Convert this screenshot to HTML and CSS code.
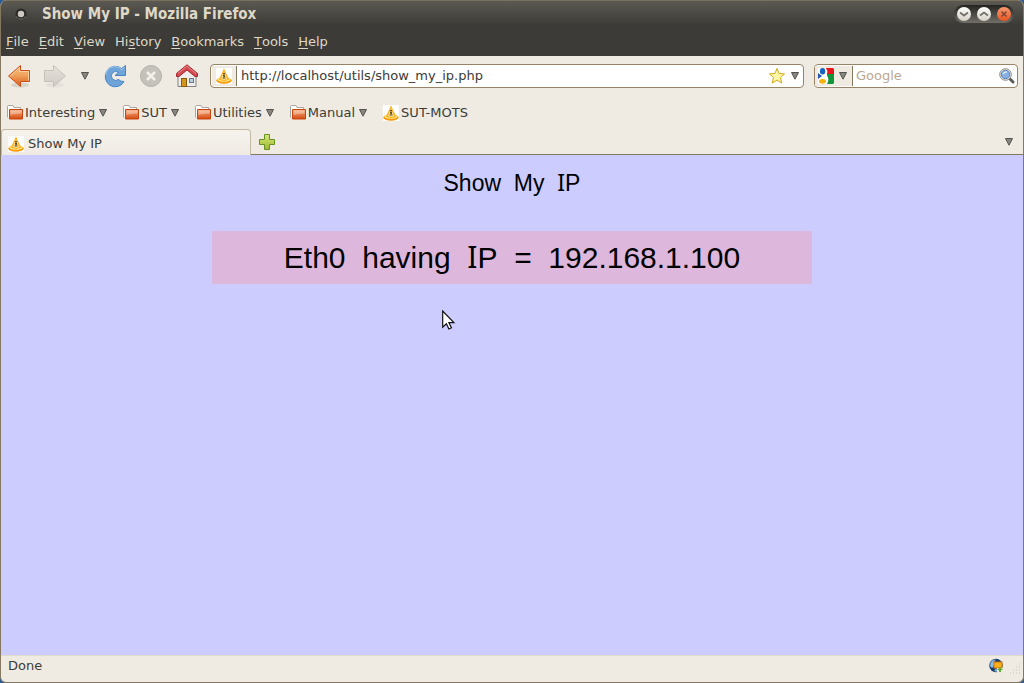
FILE: index.html
```html
<!DOCTYPE html>
<html lang="en">
<head>
<meta charset="utf-8">
<meta name="viewport" content="width=device-width, initial-scale=1">
<title>Show My IP - Mozilla Firefox</title>
<link rel="stylesheet" href="styles.css">
</head>
<body>
<svg class="defs" width="0" height="0" aria-hidden="true">
  <defs>
    <linearGradient id="orange" x1="0" y1="0" x2="0" y2="1"><stop offset="0" stop-color="#f8c089"/><stop offset=".45" stop-color="#efa45c"/><stop offset="1" stop-color="#dc5a1c"/></linearGradient>
    <linearGradient id="folder" x1="0" y1="0" x2="0" y2="1"><stop offset="0" stop-color="#f7b184"/><stop offset="1" stop-color="#d64a10"/></linearGradient>
    <linearGradient id="grey" x1="0" y1="0" x2="0" y2="1"><stop offset="0" stop-color="#e6e2dc"/><stop offset="1" stop-color="#cfcac3"/></linearGradient>
    <linearGradient id="green" x1="0" y1="0" x2="0" y2="1"><stop offset="0" stop-color="#dbe87a"/><stop offset="1" stop-color="#9ab82f"/></linearGradient>
    <symbol id="site" viewBox="0 0 16 16">
      <rect width="16" height="16" fill="#fff"/>
      <ellipse cx="8" cy="12.500" rx="7.700" ry="3.200" fill="#f59a0c"/>
      <ellipse cx="8" cy="11.500" rx="6.600" ry="2.300" fill="#ffe27a"/>
      <path d="M8 .5C8.800 1 9 3 9.800 4.600L13.300 11.500Q8 14.400 2.700 11.500L6.200 4.600C7 3 7.200 1 8 .5z" fill="#f9b52b"/>
      <path d="M8 4L11 11Q8 12.500 5 11z" fill="#ffe9a0"/>
      <path d="M7 5.500h2M8 5.500v2M7 7.500h2M7.500 9.500l.5-2 1 2M6.500 10h3" stroke="#655322" fill="none"/>
    </symbol>
    <symbol id="dir" viewBox="0 0 17 15">
      <path d="M.5 12.500V1.500Q.5.500 1.500.5H6l1 2h6.500v2" fill="#fff" stroke="#aaa69f"/>
      <path d="M2.500 4.500h13v9.500h-13z" fill="url(#folder)" stroke="#c6450f"/>
      <path d="M3.500 5.500h11v3Q9 8 3.500 10z" fill="#fff" opacity=".3"/>
    </symbol>
    <symbol id="down" viewBox="0 0 8 8">
      <path d="M.5.500h7L4 7.200z" fill="#888681" stroke="#55534e"/>
    </symbol>
  </defs>
</svg>
<div class="window">
  <header class="chrome">
    <div class="titlebar">
      <svg class="app-mark" width="14" height="14" viewBox="0 0 14 14" aria-hidden="true"><circle cx="8" cy="7" r="5.500" fill="#2d2c29"/><path d="M3 9.500Q8 15 13 9.500" fill="none" stroke="#6c6a62"/><circle cx="8" cy="7" r="3.200" fill="#cfcbc2"/></svg>
      <span class="title">Show My IP - Mozilla Firefox</span>
      <div class="controls">
        <button class="control" aria-label="Minimize"><svg width="14" height="14" viewBox="0 0 14 14"><path d="M3 5.500L7 8.500l4-3" fill="none" stroke="#73716a" stroke-width="1.800"/></svg></button>
        <button class="control" aria-label="Maximize"><svg width="14" height="14" viewBox="0 0 14 14"><path d="M3 8.500L7 5.500l4 3" fill="none" stroke="#73716a" stroke-width="1.800"/></svg></button>
        <button class="control close" aria-label="Close"><svg width="14" height="14" viewBox="0 0 14 14"><path d="M4.500 4.500l5 5M9.500 4.500l-5 5" fill="none" stroke="#7b4433" stroke-width="1.500"/></svg></button>
      </div>
    </div>
    <nav class="menubar">
      <button><u>F</u>ile</button><button><u>E</u>dit</button><button><u>V</u>iew</button><button>Hi<u>s</u>tory</button><button><u>B</u>ookmarks</button><button><u>T</u>ools</button><button><u>H</u>elp</button>
    </nav>
  </header>
  <div class="toolbar">
    <div class="nav-buttons">
      <button aria-label="Back"><svg width="24" height="24" viewBox="0 0 24 24"><ellipse cx="13" cy="21" rx="9" ry="2.500" fill="#d8d3ca"/><path d="M1.500 12L13.500 1.500v5h9v11h-9v5z" fill="url(#orange)" stroke="#cb4f18"/><path d="M3.200 12l9.300-8.300v3.800h9v9" fill="none" stroke="#fbd7ae" opacity=".8"/></svg></button>
      <button aria-label="Forward" disabled><svg width="24" height="24" viewBox="0 0 24 24"><ellipse cx="12" cy="21" rx="9" ry="2.500" fill="#e5e1da"/><path d="M22.500 12L10.500 1.500v5h-9v11h9v5z" fill="url(#grey)" stroke="#c5c0b9"/></svg></button>
      <button class="narrow" aria-label="Recent pages"><svg width="8" height="8"><use href="#down"/></svg></button>
      <button aria-label="Reload"><svg width="24" height="24" viewBox="0 0 24 24"><path d="M21 17.500A10 10.300 0 1 1 18.500 4.500L22.500 1.500v10H12l3.500-3.200A4.500 4.500 0 1 0 15.500 15.500Q18 18 21 17.500z" fill="#6fa4d9" stroke="#4485c6"/><path d="M3 11A8.800 8.800 0 0 1 18.500 5.800L21.500 3.500" fill="none" stroke="#a7c9eb"/></svg></button>
      <button aria-label="Stop" disabled><svg width="24" height="24" viewBox="0 0 24 24"><circle cx="12" cy="12" r="10.500" fill="#c5c1bb" stroke="#b5b1ac"/><path d="M8 8l8 8M16 8l-8 8" stroke="#f3f1ed" stroke-width="2.600"/></svg></button>
      <button aria-label="Home"><svg width="24" height="24" viewBox="0 0 24 24"><path d="M3 22.500V11l9-7 9 7v11.500z" fill="#efeeec" stroke="#85827e"/><rect x="6.500" y="14.500" width="5" height="8" fill="#d2951e" stroke="#8b5b0b"/><rect x="14.500" y="14.500" width="4" height="4" fill="#b9d0dc" stroke="#687985"/><path d="M1.500 12.500v-3L12 .8 22.500 9.500v3H20L12 6 4 12.500z" fill="#d34a50" stroke="#a62730"/><path d="M3 9.500L12 2l9 7.500" fill="none" stroke="#e98a8c"/></svg></button>
    </div>
    <div class="field address">
      <span class="site-id"><svg width="16" height="16"><use href="#site"/></svg></span>
      <input type="text" aria-label="Address" value="http://localhost/utils/show_my_ip.php">
      <button aria-label="Bookmark this page"><svg width="18" height="18" viewBox="0 0 18 18"><path d="M9 1.500l2.100 5 5.400.4-4 3.600 1.300 5.500L9 13.100 4.200 16l1.300-5.500-4-3.600 5.400-.4z" fill="#fff6a8" stroke="#cfa91a" stroke-linejoin="round"/></svg></button>
      <button aria-label="Show history"><svg width="8" height="8"><use href="#down"/></svg></button>
    </div>
    <div class="field search">
      <button class="engine" aria-label="Search engine"><svg width="16" height="16" viewBox="0 0 16 16"><rect width="16" height="16" rx="1" fill="#fff"/><path d="M8 0h7l1 1v5H9z" fill="#e8161c"/><path d="M9 6h7v9l-1 1H9z" fill="#14943a"/><path d="M0 5l4 3-4 3z" fill="#2458ae"/><path d="M7 0c3 2 3 5 1 7 3 2 3 6 1 9H3l-1-4 4-3-2-3z" fill="#fff"/><ellipse cx="4.600" cy="3.200" rx="2.700" ry="3.200" fill="#1763bd"/><ellipse cx="4.500" cy="13.300" rx="3.500" ry="2.400" fill="#f4b20e"/></svg><svg width="8" height="8"><use href="#down"/></svg></button>
      <input type="search" aria-label="Search" placeholder="Google">
      <button aria-label="Search"><svg width="16" height="16" viewBox="0 0 16 16"><path d="M10 10l4 4" stroke="#5c5b58" stroke-width="3" stroke-linecap="round"/><circle cx="6.500" cy="6.500" r="5.800" fill="#e7e6e3" stroke="#8c8a86"/><circle cx="6.500" cy="6.500" r="4.200" fill="#86b0e2" stroke="#5b84bd"/><path d="M4 6Q5 3.700 8 4" fill="none" stroke="#d7e7f8" stroke-width="1.500"/></svg></button>
    </div>
  </div>
  <nav class="bookmarks">
    <button><svg width="17" height="15"><use href="#dir"/></svg>Interesting<svg class="more" width="8" height="8"><use href="#down"/></svg></button>
    <button><svg width="17" height="15"><use href="#dir"/></svg>SUT<svg class="more" width="8" height="8"><use href="#down"/></svg></button>
    <button><svg width="17" height="15"><use href="#dir"/></svg>Utilities<svg class="more" width="8" height="8"><use href="#down"/></svg></button>
    <button><svg width="17" height="15"><use href="#dir"/></svg>Manual<svg class="more" width="8" height="8"><use href="#down"/></svg></button>
    <a href="#"><svg width="16" height="16"><use href="#site"/></svg>SUT-MOTS</a>
  </nav>
  <div class="tabs">
    <button class="tab"><svg width="16" height="16"><use href="#site"/></svg>Show My IP</button>
    <button class="new-tab" aria-label="New tab"><svg width="16" height="16" viewBox="0 0 16 16"><path d="M5.500.500h5v5h5v5h-5v5h-5v-5h-5v-5h5z" fill="url(#green)" stroke="#669221"/></svg></button>
    <button class="all-tabs" aria-label="List all tabs"><svg width="8" height="8"><use href="#down"/></svg></button>
  </div>
  <main class="page">
    <h1>Show&nbsp; My&nbsp; <span class="cap">I</span>P</h1>
    <p class="result">Eth0&nbsp; having&nbsp; <span class="cap">I</span>P&nbsp; =&nbsp; 192.168.1.100</p>
    <svg class="pointer" width="14" height="21" viewBox="0 0 14 21" aria-hidden="true"><path d="M1.500 1.500v16l3.700-3.400 2.500 5.200 2.500-1.200-2.500-5.100h5z" fill="#777" opacity=".4"/><path d="M.7 1v16.200l3.700-3.400 2.500 5.200 2.500-1.200-2.500-5.100h5z" fill="#fff" stroke="#111" stroke-width="1.200"/></svg>
  </main>
  <footer class="status">
    <span>Done</span>
    <svg class="world" width="16" height="16" viewBox="0 0 16 16" aria-hidden="true"><circle cx="7" cy="7.500" r="6.700" fill="#163a68"/><path d="M1.500 4.500Q4 1 7 1.500L5 4l1 3-3 3-2-2z" fill="#8db9de"/><path d="M5 13l2-3 3 3-2 1z" fill="#7eabd1"/><rect x="5" y="4" width="8" height="6" fill="#ffae16" stroke="#c17611"/><path d="M8 10h6v5H8z" fill="#e5ead9"/><path d="M11 9l3 3h-2v2h-2v-2H8z" fill="#67a832"/></svg>
    <svg class="grip" width="12" height="14" viewBox="0 0 12 14" aria-hidden="true"><path d="M10 1h1M7 4h1M10 4h1M4 7h1M7 7h1M10 7h1M1 10h1M4 10h1M7 10h1M10 10h1" stroke="#cac5bb" stroke-width="1"/></svg>
  </footer>
</div>
</body>
</html>
```
FILE: styles.css
```css
* { box-sizing: border-box; }

body {
  margin: 0;
  background: #2c5c98;
  color: #3c3b37;
  font: 13px/18px "DejaVu Sans", sans-serif;
}

.defs { position: absolute; }
svg { display: block; flex: none; }

button {
  display: flex;
  align-items: center;
  justify-content: center;
  padding: 0;
  border: 0;
  background: none;
  color: inherit;
  font: inherit;
}

.window {
  display: flex;
  flex-direction: column;
  min-height: 100vh;
  border: 1px solid #857860;
  border-top: 0;
  border-radius: 6px;
  overflow: hidden;
  background: #efebe3;
}

.chrome {
  border-top: 1px solid #78705d;
  background: linear-gradient(#5b5952, #3c3b37 24px);
  color: #dfd8c8;
}

.titlebar {
  display: flex;
  align-items: center;
  height: 27px;
  padding: 0 9px 2px 12px;
}

.title {
  flex: 1;
  padding-left: 15px;
  font-family: "DejaVu Sans Condensed", "DejaVu Sans", sans-serif;
  font-size: 15px;
  font-weight: bold;
}

.controls {
  display: flex;
  gap: 6px;
  padding: 2px 3px;
  border-radius: 9px;
  background: linear-gradient(#242320, #706e67);
}

.control {
  width: 14px;
  height: 14px;
  border-radius: 50%;
  background: linear-gradient(#fff, #d6d1c6);
}

.close { background: linear-gradient(#f99a70, #e95420); }

.menubar {
  display: flex;
  gap: 10px;
  height: 28px;
  padding: 0 5px;
}

.menubar u { text-underline-offset: 2px; }

.toolbar {
  display: flex;
  align-items: center;
  height: 41px;
  padding: 0 5px 2px 6px;
}

.nav-buttons {
  display: flex;
  align-items: center;
  gap: 12px;
  margin-right: 11px;
}

.narrow { width: 24px; margin: 0 -6px; }

.field {
  display: flex;
  align-items: center;
  height: 24px;
  border: 1px solid #978467;
  border-radius: 4px;
  background: #fff;
}

.field input {
  flex: 1;
  min-width: 0;
  padding: 0 4px;
  border: 0;
  outline: 0;
  background: transparent;
  color: #3c3b37;
  font: inherit;
}

.search input { padding: 0 3px; }
.field input::placeholder { color: #b9a88f; opacity: 1; }

.address { flex: 1; gap: 5px; padding-right: 4px; }
.address input { margin-left: -5px; }

.site-id {
  display: flex;
  align-items: center;
  height: 20px;
  margin-left: 1px;
  padding: 0 4px;
  border-right: 1px solid #857860;
  background: #efebe3;
}

.search {
  flex: none;
  width: 204px;
  margin-left: 10px;
  padding-right: 2px;
}

.engine {
  gap: 5px;
  height: 20px;
  padding: 0 5px 0 3px;
  border-right: 1px solid #857860;
  background: #efebe3;
}

.bookmarks {
  display: flex;
  align-items: center;
  gap: 16px;
  height: 31px;
  padding: 0 6px;
}

.bookmarks a {
  display: flex;
  align-items: center;
  gap: 2px;
  color: inherit;
  text-decoration: none;
}

.bookmarks button svg:first-child { margin-right: 1px; }
.bookmarks .more { margin-left: 4px; }

.tabs {
  display: flex;
  align-items: center;
  height: 27px;
  border-bottom: 1px solid #857860;
}

.tab {
  gap: 4px;
  width: 250px;
  height: 26px;
  margin-bottom: -1px;
  padding: 3px 6px 0;
  justify-content: flex-start;
  border: 1px solid #c3b8a3;
  border-bottom: 0;
  border-radius: 4px 4px 0 0;
  background: linear-gradient(#f6f3ee, #efebe3);
}

.new-tab { margin-left: 8px; padding-top: 2px; }
.all-tabs { margin: 0 10px 0 auto; padding-top: 2px; }

.page {
  position: relative;
  flex: 1;
  padding: 14px 16px;
  background: #ccf;
  color: #000;
  font-family: "Liberation Sans", Arial, sans-serif;
  text-align: center;
}

.cap { font-family: "Noto Sans", sans-serif; line-height: 0; }

h1 {
  margin: 0;
  font-size: 23px;
  font-weight: normal;
  line-height: 28px;
}

.result {
  max-width: 600px;
  margin: 34px auto 0;
  padding: 8px;
  background: #deb8dc;
  font-size: 30px;
  line-height: 37px;
}

.pointer {
  position: absolute;
  left: 441px;
  top: 155px;
}

.status {
  display: flex;
  align-items: center;
  height: 27px;
  padding: 0 2px 6px 7px;
  border-top: 1px solid #e2dac9;
}

.world { margin-left: auto; }
.grip { margin: 8px 0 0 4px; }
```
